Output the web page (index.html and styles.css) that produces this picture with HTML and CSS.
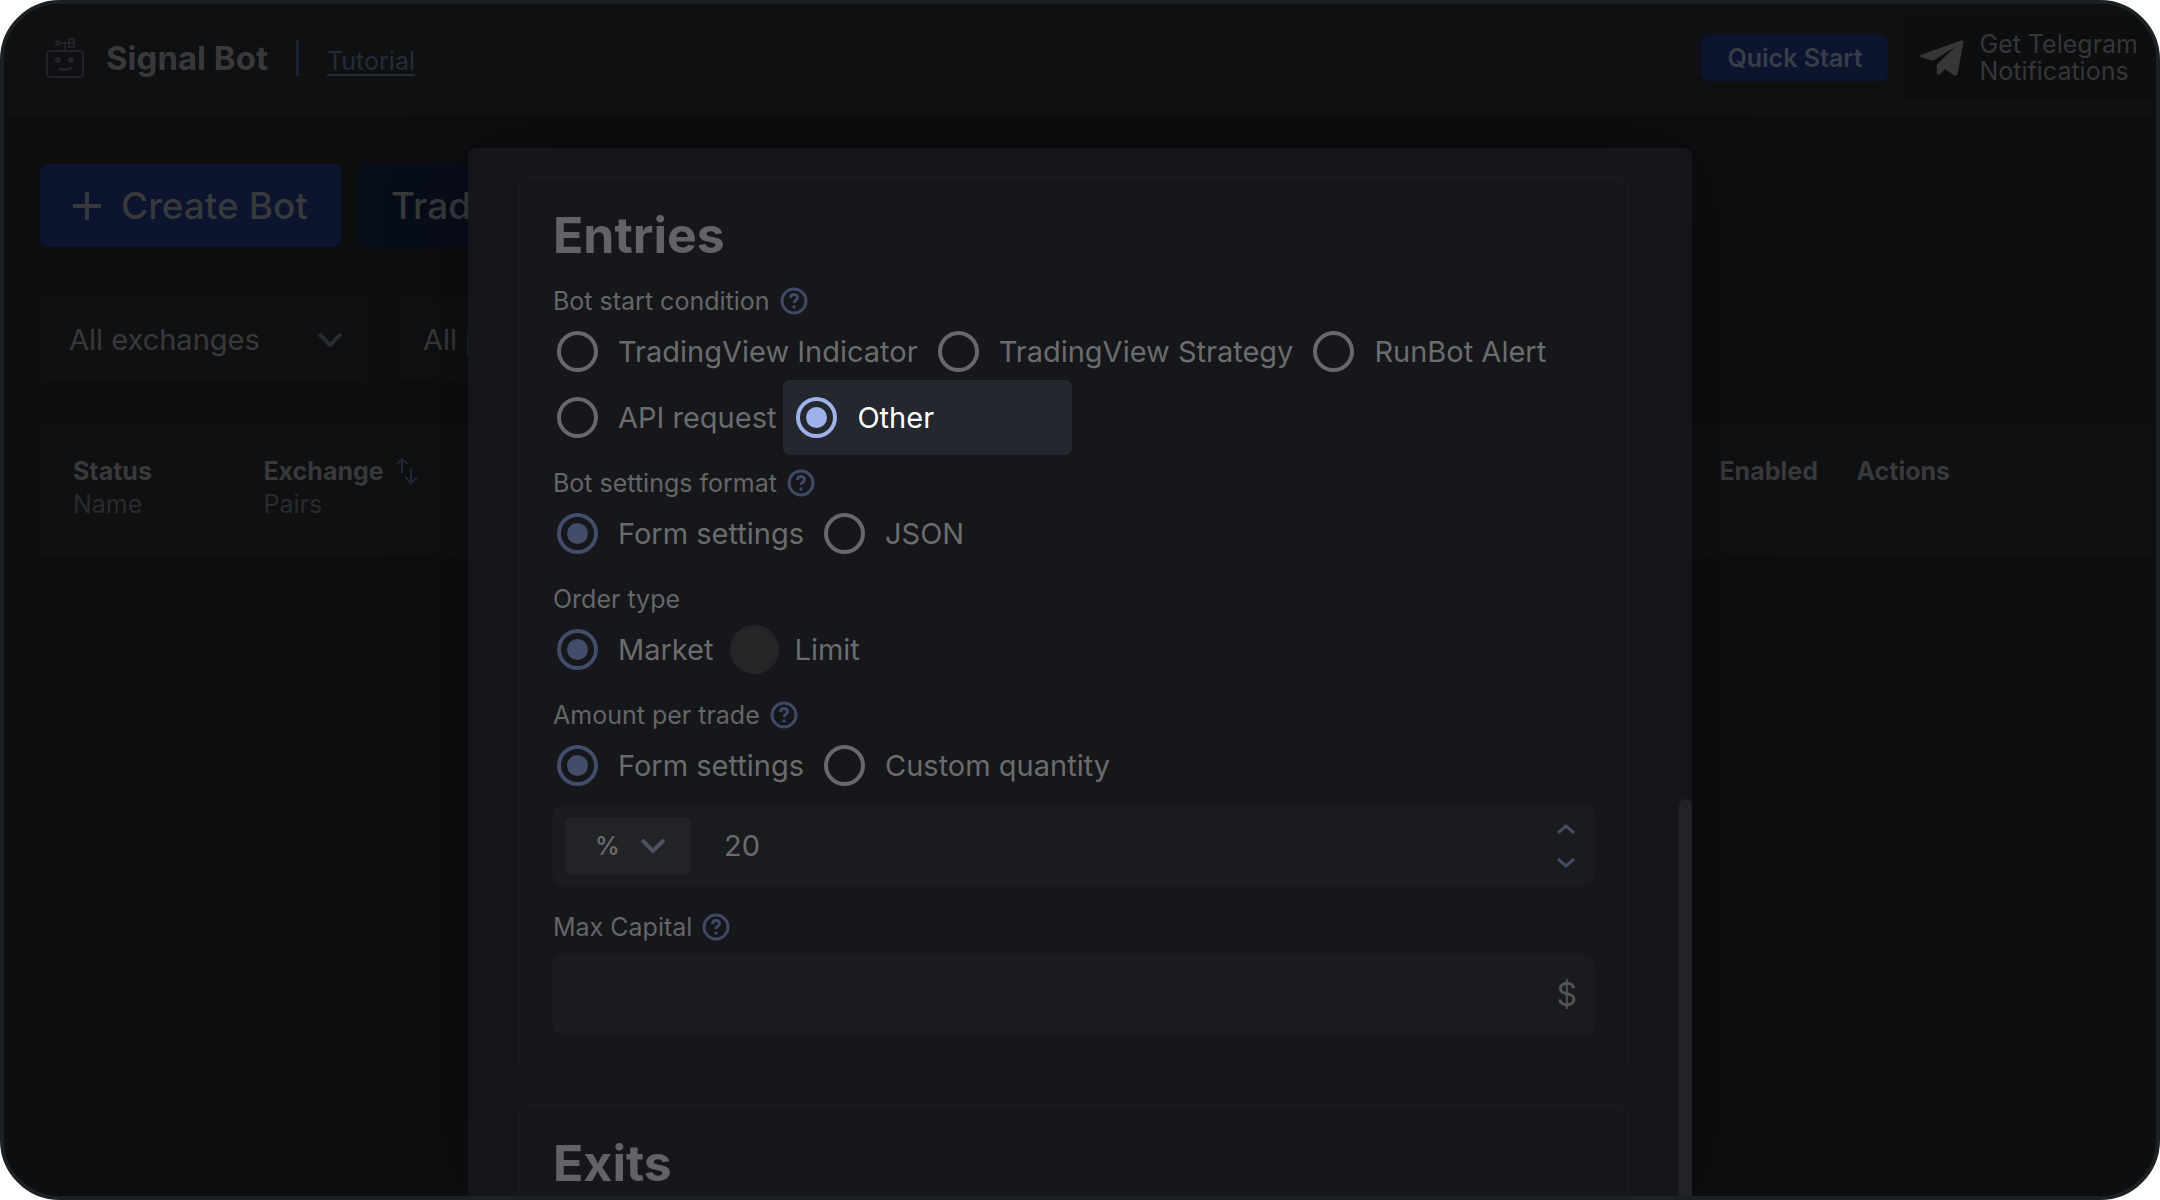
FILE: index.html
```html
<!DOCTYPE html>
<html lang="en">
<head>
  <meta charset="UTF-8" />
  <meta name="viewport" content="width=device-width, initial-scale=1.0" />
  <title>Signal Bot</title>
  <link rel="stylesheet" href="styles.css">
</head>
<body>
  <div class="app">

    <!-- Top bar -->
    <header class="topbar">
      <svg class="logo" viewBox="0 0 38 40" fill="none" stroke="currentColor" stroke-width="2">
        <rect x="1" y="13" width="36" height="26" rx="3"/>
        <path d="M19 13V5M14 5h9M23 1h5v8h-5zM23 5h5"/>
        <circle cx="12" cy="5" r="2"/>
        <circle cx="12" cy="22" r="3" fill="currentColor" stroke="none"/>
        <circle cx="25" cy="22" r="3" fill="currentColor" stroke="none"/>
        <path d="M14 31c4 1 8 1 11-1" stroke-width="3" stroke-linecap="round"/>
      </svg>
      <h1 class="brand">Signal Bot</h1>
      <span class="divider"></span>
      <a class="tutorial" href="#">Tutorial</a>
      <button type="button" class="quick-start">Quick Start</button>
      <a class="telegram" href="#">
        <svg width="44" height="37" viewBox="0 0 44 37" fill="currentColor">
          <path d="M41 0.500c1.500-.6 2.800.4 2.400 2.400L37.500 34c-.5 2-1.900 2.500-3.500 1.500l-9-6.500-5 5c-1.500 1.400-3.200 1.200-3.200-1V24.500L35 7 13 21 1.500 17.500c-2-.8-2-2.200.2-3.100z"/>
        </svg>
        <span>Get Telegram<br>Notifications</span>
      </a>
    </header>

    <!-- Bots page -->
    <main class="content">
      <div class="actions">
        <button type="button" class="btn btn-create">
          <svg width="28" height="30" viewBox="0 0 28 30" stroke="currentColor" stroke-width="4"><path d="M14 1v28M0 15h28"/></svg>
          Create Bot
        </button>
        <button type="button" class="btn btn-trade">Trading</button>
      </div>

      <div class="filters">
        <div class="filter">
          <select aria-label="Exchange"><option>All exchanges</option></select>
          <svg class="chevron" viewBox="0 0 24 15" fill="none" stroke="currentColor" stroke-width="4"><path d="M1 2l11 11L23 2"/></svg>
        </div>
        <div class="filter">
          <select aria-label="Pair"><option>All pairs</option></select>
        </div>
      </div>

      <table class="bots">
        <thead>
          <tr>
            <th class="col-status">Status<small>Name</small></th>
            <th class="col-exchange">
              Exchange
              <svg class="sort" width="22" height="28" viewBox="0 0 22 28" fill="none" stroke="currentColor" stroke-width="2"><path d="M6 16V2M1 7l5-5 6 5M15 12v14M9 20l6 6 6-6"/></svg>
              <small>Pairs</small>
            </th>
            <th class="col-enabled">Enabled</th>
            <th>Actions</th>
          </tr>
        </thead>
      </table>
    </main>

    <!-- Bot settings dialog -->
    <div class="overlay">
      <div class="modal" role="dialog" aria-label="Bot settings">

        <section class="panel">
          <h2>Entries</h2>

          <fieldset class="group">
            <legend>Bot start condition
              <svg class="help" viewBox="0 0 28 28"><circle cx="14" cy="14" r="12"/><path d="M10.500 11c0-5 7-4.500 7-.5 0 2.500-3.500 2.800-3.500 5.500"/><path d="M14 18.500v3"/></svg>
            </legend>
            <div class="options">
              <label class="option"><input type="radio" name="start">TradingView Indicator</label>
              <label class="option"><input type="radio" name="start">TradingView Strategy</label>
              <label class="option"><input type="radio" name="start">RunBot Alert</label>
              <label class="option"><input type="radio" name="start">API request</label>
              <label class="option spotlight"><input type="radio" name="start" checked>Other</label>
            </div>
          </fieldset>

          <fieldset class="group">
            <legend>Bot settings format
              <svg class="help" viewBox="0 0 28 28"><circle cx="14" cy="14" r="12"/><path d="M10.500 11c0-5 7-4.500 7-.5 0 2.500-3.500 2.800-3.500 5.500"/><path d="M14 18.500v3"/></svg>
            </legend>
            <div class="options">
              <label class="option"><input type="radio" name="format" checked>Form settings</label>
              <label class="option"><input type="radio" name="format">JSON</label>
            </div>
          </fieldset>

          <fieldset class="group">
            <legend>Order type</legend>
            <div class="options">
              <label class="option"><input type="radio" name="order" checked>Market</label>
              <label class="option"><input type="radio" name="order" disabled>Limit</label>
            </div>
          </fieldset>

          <fieldset class="group">
            <legend>Amount per trade
              <svg class="help" viewBox="0 0 28 28"><circle cx="14" cy="14" r="12"/><path d="M10.500 11c0-5 7-4.500 7-.5 0 2.500-3.500 2.800-3.500 5.500"/><path d="M14 18.500v3"/></svg>
            </legend>
            <div class="options">
              <label class="option"><input type="radio" name="amount" checked>Form settings</label>
              <label class="option"><input type="radio" name="amount">Custom quantity</label>
            </div>
            <div class="field amount-field">
              <div class="unit">
                <select aria-label="Unit"><option>%</option></select>
                <svg class="chevron" viewBox="0 0 24 15" fill="none" stroke="currentColor" stroke-width="4"><path d="M1 2l11 11L23 2"/></svg>
              </div>
              <input type="number" value="20" aria-label="Amount">
              <div class="steps">
                <button type="button" aria-label="Increase"><svg width="18" height="10" viewBox="0 0 18 10"><path d="M1 9l8-7 8 7"/></svg></button>
                <button type="button" aria-label="Decrease"><svg width="18" height="10" viewBox="0 0 18 10"><path d="M1 1l8 7 8-7"/></svg></button>
              </div>
            </div>
          </fieldset>

          <label class="field-label" for="maxCapital">Max Capital
            <svg class="help" viewBox="0 0 28 28"><circle cx="14" cy="14" r="12"/><path d="M10.500 11c0-5 7-4.500 7-.5 0 2.500-3.500 2.800-3.500 5.500"/><path d="M14 18.500v3"/></svg>
          </label>
          <div class="field">
            <input type="text" id="maxCapital">
            <span class="currency">$</span>
          </div>
        </section>

        <section class="panel">
          <h2>Exits</h2>
        </section>

        <div class="scroll-thumb"></div>
      </div>
    </div>

  </div>
</body>
</html>
```
FILE: styles.css
```css
/* Global Styles */
* {
  box-sizing: border-box;
}
body {
  margin: 0;
  background: #fff;
  color: #38393b;
  font-family: Inter, "Liberation Sans", sans-serif;
  font-size: 25px;
}
button, select, input {
  font: inherit;
  color: inherit;
  border: none;
  background: transparent;
}
select {
  appearance: none;
}
svg {
  display: block;
  flex: none;
}
.app {
  position: relative;
  height: 100vh;
  overflow: hidden;
  border: 4px solid #1c2023;
  border-radius: 60px;
  background: #0d0e10;
}

/* Top bar */
.topbar {
  display: flex;
  align-items: center;
  height: 112px;
  padding: 0 18px 4px 42px;
  background: #0f1012;
}
.logo {
  width: 38px;
  height: 40px;
  margin-right: 22px;
  color: #222326;
}
.brand {
  margin: 0;
  font-size: 33px;
  font-weight: 700;
}
.divider {
  width: 3px;
  height: 36px;
  margin: 0 28px;
  background: #1c2130;
}
.tutorial {
  padding-top: 5px;
  color: #262b3a;
  text-underline-offset: 4px;
}
.quick-start {
  height: 46px;
  margin-left: auto;
  padding: 0 26px;
  border-radius: 8px;
  background: #0c142f;
  color: #3a3d48;
  font-weight: 600;
}
.telegram {
  display: flex;
  align-items: center;
  gap: 15px;
  height: 82px;
  margin: 0 -18px 0 14px;
  padding: 0 18px;
  background: #0d0e10;
  color: #353638;
  line-height: 27px;
  text-decoration: none;
}

/* Page content */
.content {
  padding: 48px 0 0 36px;
}
.actions {
  display: flex;
  gap: 17px;
}
.btn {
  display: flex;
  align-items: center;
  gap: 20px;
  height: 83px;
  padding: 0 33px;
  border-radius: 8px;
  font-size: 37px;
  font-weight: 500;
}
.btn-create {
  background: #0c142f;
}
.btn-trade {
  background: #080d1a;
}
.filters {
  display: flex;
  gap: 25px;
  margin-top: 50px;
}
.filter {
  display: flex;
  align-items: center;
  width: 329px;
  height: 84px;
  padding: 0 27px 0 29px;
  border-radius: 8px;
  background: #0f1012;
  font-size: 29px;
}
.filter select {
  flex: 1;
  min-width: 0;
  padding: 0;
}
.chevron {
  width: 24px;
  height: 15px;
  color: #282b32;
}
.bots {
  width: 100%;
  height: 131px;
  margin-top: 43px;
  border-collapse: collapse;
  background: #0f1012;
  table-layout: fixed;
}
.bots th {
  padding: 31px 0 0 33px;
  text-align: left;
  vertical-align: top;
  line-height: 33px;
  font-weight: 700;
}
.bots small {
  display: block;
  color: #2a2b2d;
  font-size: 25px;
  font-weight: 400;
}
.bots .col-status {
  width: 9%;
}
.bots .col-exchange {
  width: 1456px;
}
.bots .col-enabled {
  width: 137px;
}
.sort {
  display: inline-block;
  margin: -2px 0 -5px 6px;
  color: #22273a;
}

/* Dialog */
.overlay {
  position: absolute;
  inset: 0;
  display: flex;
  justify-content: center;
  padding-top: 144px;
}
.modal {
  position: relative;
  width: 100%;
  max-width: 1224px;
  padding: 28px 62px 0 50px;
  overflow: hidden;
  border-radius: 8px 8px 0 0;
  background: #141619;
  box-shadow: 0 0 80px rgba(0, 0, 0, 0.3);
  color: #6b6c6e;
}
.scroll-thumb {
  position: absolute;
  top: 651px;
  right: 0;
  bottom: -12px;
  width: 13px;
  border-radius: 7px;
  background: #222327;
}
.panel {
  margin-bottom: 34px;
  padding: 27px 33px 33px;
  border: 2px solid #191a1f;
  border-radius: 10px;
  background: #16171a;
}
.panel h2 {
  margin: 0 0 19px;
  color: #626365;
  font-size: 50px;
  line-height: 60px;
}
.group {
  min-width: 0;
  margin: 0 0 16px;
  padding: 0;
  border: none;
}
.group legend, .field-label {
  display: flex;
  align-items: center;
  gap: 10px;
  height: 34px;
  padding: 0;
  color: #656668;
}
.help {
  width: 28px;
  height: 28px;
  fill: none;
  stroke: #3f4966;
  stroke-width: 3;
}
.options {
  display: flex;
  flex-wrap: wrap;
  gap: 0 16px;
}
.option {
  position: relative;
  display: flex;
  align-items: center;
  gap: 20px;
  height: 66px;
  padding-left: 4px;
  font-size: 29px;
}
.option input {
  display: grid;
  place-content: center;
  appearance: none;
  width: 41px;
  height: 41px;
  margin: 0;
  border: 4px solid #67686a;
  border-radius: 50%;
}
.option input:checked {
  border-color: #434d69;
}
.option input:checked::before {
  content: "";
  width: 21px;
  height: 21px;
  border-radius: 50%;
  background: #434d69;
}
.option input:disabled {
  border-color: #242628;
  background: #252729;
  box-shadow: 0 0 0 4px #232527;
}

/* Highlighted option */
.spotlight {
  z-index: 0;
  color: #fff;
}
.spotlight::before {
  content: "";
  position: absolute;
  z-index: -1;
  top: -4px;
  left: -9px;
  width: 289px;
  height: 75px;
  border-radius: 7px;
  background: #24272e;
}
.spotlight input:checked {
  border-color: #9fb1e9;
}
.spotlight input:checked::before {
  background: #9fb1e9;
}

/* Fields */
.field {
  display: flex;
  align-items: center;
  height: 81px;
  padding: 0 18px 0 12px;
  border-radius: 8px;
  background: #1a1b1e;
  font-size: 29px;
}
.field input {
  flex: 1;
  min-width: 0;
  padding: 0 0 0 33px;
  appearance: textfield;
  outline: none;
}
.field input::-webkit-inner-spin-button {
  appearance: none;
}
.amount-field {
  margin-top: 7px;
}
.field-label {
  margin: 24px 0 10px;
}
.unit {
  display: flex;
  align-items: center;
  width: 126px;
  height: 58px;
  padding: 0 26px 0 30px;
  border-radius: 5px;
  background: #212327;
  font-size: 25px;
  font-weight: 500;
}
.unit select {
  flex: 1;
  min-width: 0;
  padding: 0;
}
.unit .chevron {
  color: #4d535d;
}
.steps {
  display: grid;
  gap: 20px;
}
.steps button {
  padding: 2px;
}
.steps svg {
  fill: none;
  stroke: #454d66;
  stroke-width: 3;
}
.currency {
  color: #535456;
  font-size: 32px;
}
```
